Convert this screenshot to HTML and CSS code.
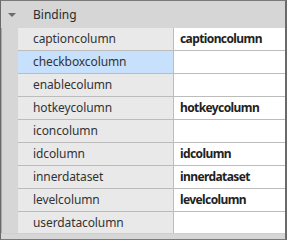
FILE: index.html
```html
<!DOCTYPE html>
<html lang="en">
<head>
  <meta charset="UTF-8" />
  <title>Properties</title>
  <link rel="stylesheet" href="styles.css">
</head>
<body>
  <div class="grid">
    <div class="group">
      <span class="arrow"></span>
      <span class="group-name">Binding</span>
    </div>
    <div class="rows">
      <div class="gutter"></div>
      <div class="list">
        <div class="row"><div class="name">captioncolumn</div><div class="value">captioncolumn</div></div>
        <div class="row selected"><div class="name">checkboxcolumn</div><div class="value"></div></div>
        <div class="row"><div class="name">enablecolumn</div><div class="value"></div></div>
        <div class="row"><div class="name">hotkeycolumn</div><div class="value">hotkeycolumn</div></div>
        <div class="row"><div class="name">iconcolumn</div><div class="value"></div></div>
        <div class="row"><div class="name">idcolumn</div><div class="value">idcolumn</div></div>
        <div class="row"><div class="name">innerdataset</div><div class="value">innerdataset</div></div>
        <div class="row"><div class="name">levelcolumn</div><div class="value">levelcolumn</div></div>
        <div class="row"><div class="name">userdatacolumn</div><div class="value"></div></div>
      </div>
    </div>
    <div class="footer"></div>
  </div>
</body>
</html>
```

FILE: styles.css
```css
* { box-sizing: border-box; margin: 0; padding: 0; }

body {
  font-family: 'Noto Sans', 'Open Sans', sans-serif;
  font-size: 12px;
  background: #fff;
}

.grid {
  width: 287px;
  height: 240px;
  border: 1px solid #7a7a7a;
  border-left-color: #6a6a6a;
  border-right: 2px solid #6a6a6a;
  display: flex;
  flex-direction: column;
  background: #d6d6d6;
}

.group {
  height: 27px;
  display: flex;
  align-items: center;
  color: #2b2b2b;
}

.arrow {
  width: 0;
  height: 0;
  margin-left: 7px;
  border-left: 4px solid transparent;
  border-right: 4px solid transparent;
  border-top: 4px solid #6b6b6b;
}

.group-name {
  margin-left: 17px;
}

.rows {
  display: flex;
  height: 205px;
  overflow: hidden;
}

.gutter {
  width: 17px;
  flex-shrink: 0;
  border-left: 1px solid #a8a8a8;
}

.list {
  flex: 1;
}

.row {
  display: flex;
  height: 23px;
  border-bottom: 1px solid #bcbcbc;
}

.name {
  width: 156px;
  padding-left: 15px;
  line-height: 22px;
  background: #e9e9e9;
  border-right: 1px solid #bcbcbc;
  color: #333;
  letter-spacing: -0.1px;
}

.value {
  flex: 1;
  padding-left: 6px;
  line-height: 22px;
  background: #fff;
  font-weight: bold;
  color: #222;
  letter-spacing: -0.6px;
}

.row.selected .name {
  background: #c7e0fb;
}

.footer {
  flex: 1;
  border-top: 1px solid #cfcfcf;
}
```
